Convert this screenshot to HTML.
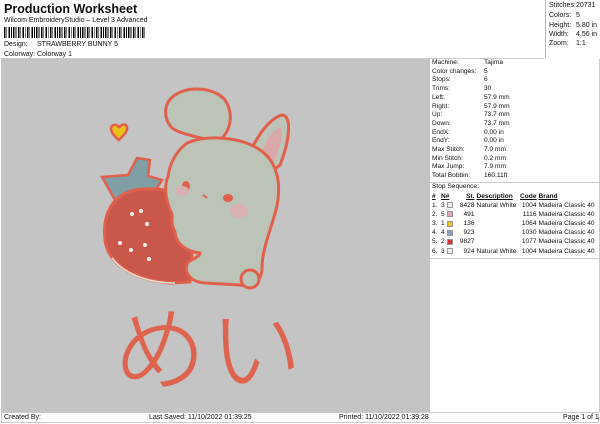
<!DOCTYPE html>
<html><head><meta charset="utf-8"><style>
*{margin:0;padding:0;box-sizing:border-box}
body{width:600px;height:424px;background:#fff;font-family:"Liberation Sans",Arial,sans-serif;position:relative;overflow:hidden;color:#111}
.a{position:absolute;white-space:nowrap}
.s{font-size:7px}
#stats{position:absolute;left:545px;top:0;width:55px;height:58px;border-left:1px solid #bbb}
#gray{position:absolute;left:1px;top:59px;width:429px;height:353px;background:#c4c4c4}
#right{position:absolute;left:430px;top:59px;width:170px;height:353px;border-right:1px solid #ccc}
table{border-collapse:collapse;font-size:6.6px;white-space:nowrap}
td{padding:0;height:8.7px;line-height:8.7px}
.t2 td{height:9.1px;line-height:9.1px}
.sw{display:inline-block;width:6px;height:6px;border:1px solid #999;vertical-align:middle}
</style></head><body>
<div class="a" style="left:4px;top:2px;font-size:12.5px;font-weight:bold">Production Worksheet</div>
<div class="a s" style="left:4px;top:17px">Wilcom EmbroideryStudio – Level 3 Advanced</div>
<div class="a" style="left:4px;top:27px;width:142px;height:11px;background:repeating-linear-gradient(90deg,#000 0 1.5px,#fff 1.5px 2.5px,#000 2.5px 3.2px,#fff 3.2px 4.6px)"></div>
<div class="a s" style="left:4px;top:41px">Design:</div>
<div class="a s" style="left:37px;top:41px">STRAWBERRY BUNNY 5</div>
<div class="a s" style="left:4px;top:51px">Colorway:</div>
<div class="a s" style="left:37px;top:51px">Colorway 1</div>
<div style="position:absolute;left:0;top:58px;width:545px;border-top:1px solid #ccc"></div>
<div id="stats">
<div class="a s" style="left:3px;top:2px">Stitches:</div><div class="a s" style="left:30px;top:2px">20731</div>
<div class="a s" style="left:3px;top:12px">Colors:</div><div class="a s" style="left:30px;top:12px">5</div>
<div class="a s" style="left:3px;top:22px">Height:</div><div class="a s" style="left:30px;top:22px">5.80 in</div>
<div class="a s" style="left:3px;top:31px">Width:</div><div class="a s" style="left:30px;top:31px">4.56 in</div>
<div class="a s" style="left:3px;top:40px">Zoom:</div><div class="a s" style="left:30px;top:40px">1:1</div>
</div>
<div id="gray">
<svg width="429" height="353" viewBox="1 59 429 353" style="position:absolute;left:0;top:0">
<path d="M119 140 C110 133 109 126 114 125 C117 124 119 127 119 128 C121 124 126 123 127 127 C128 131 124 135 119 140Z" fill="#e8c21a" stroke="#e0604c" stroke-width="2.5"/>
<path d="M115 200 L102 177 L128 175 L137 158 L150 160 L148 176 L162 180 L152 196 L120 203Z" fill="#7f9fa4" stroke="#e0604c" stroke-width="2.5"/>
<path d="M135 190 C112 195 102 215 105 240 C108 265 135 280 170 283 L190 282 L195 205 C185 192 158 186 135 190Z" fill="#c9584b" stroke="#e0604c" stroke-width="3"/>
<path d="M112 258 C125 275 150 283 175 283" stroke="#e8ddd0" stroke-width="1.5" fill="none"/>
<g fill="#eee">
<circle cx="132" cy="214" r="2"/><circle cx="141" cy="211" r="2"/><circle cx="147" cy="224" r="2"/><circle cx="120" cy="243" r="2"/><circle cx="145" cy="245" r="2"/><circle cx="131" cy="250" r="2"/><circle cx="149" cy="259" r="2"/>
</g>
<path d="M222 138 C232 128 233 112 225 100 C215 88 190 85 175 95 C163 103 163 118 172 128 C182 135 200 137 212 141Z" fill="#bcc4b8" stroke="#e0604c" stroke-width="3"/>
<path d="M250 152 C258 135 270 118 282 115 C292 115 290 140 280 165 L268 175Z" fill="#bcc4b8" stroke="#e0604c" stroke-width="3"/>
<path d="M262 150 C268 136 276 127 281 128 C284 136 279 150 273 163Z" fill="#d9a9a9"/>
<path d="M187 143 C205 135 240 136 260 150 C278 162 282 185 276 210 C270 232 262 250 262 268 C262 283 250 287 240 285 L205 283 C190 282 183 272 188 262 C195 258 200 256 200 253 C188 252 176 245 175 232 C170 222 173 218 172 214 C165 200 164 185 168 177 C170 160 178 150 187 143Z" fill="#bcc4b8" stroke="#e0604c" stroke-width="3"/>
<circle cx="250" cy="279" r="9" fill="#bcc4b8" stroke="#e0604c" stroke-width="3"/>
<ellipse cx="186" cy="186" rx="4" ry="5" fill="#e0604c"/>
<ellipse cx="228" cy="198" rx="5" ry="4" fill="#e0604c"/>
<path d="M203 195 L207 198" stroke="#e0604c" stroke-width="2"/>
<ellipse cx="182" cy="191" rx="7" ry="5" fill="#d9b0b0"/>
<ellipse cx="239" cy="211" rx="9" ry="7" fill="#d9b0b0"/>
<text x="114" y="383" font-family="Noto Sans CJK JP,sans-serif" font-size="92" font-weight="300" fill="#df644f" stroke="#df644f" stroke-width="0.8" letter-spacing="4">めい</text>
</svg>
</div>
<div id="right">
<div style="position:absolute;left:2px;top:0">
<table>
<tr><td style="width:52px">Machine:</td><td>Tajima</td></tr>
<tr><td>Color changes:</td><td>5</td></tr>
<tr><td>Stops:</td><td>6</td></tr>
<tr><td>Trims:</td><td>30</td></tr>
<tr><td>Left:</td><td>57.9 mm</td></tr>
<tr><td>Right:</td><td>57.9 mm</td></tr>
<tr><td>Up:</td><td>73.7 mm</td></tr>
<tr><td>Down:</td><td>73.7 mm</td></tr>
<tr><td>EndX:</td><td>0.00 in</td></tr>
<tr><td>EndY:</td><td>0.00 in</td></tr>
<tr><td>Max Stitch:</td><td>7.0 mm</td></tr>
<tr><td>Min Stitch:</td><td>0.2 mm</td></tr>
<tr><td>Max Jump:</td><td>7.9 mm</td></tr>
<tr><td>Total Bobbin:</td><td>160.11ft</td></tr>
</table></div>
<div style="position:absolute;left:0;top:123px;width:170px;border-top:1px solid #ccc"></div>
<div class="a" style="left:2px;top:124px;font-size:6.6px">Stop Sequence:</div>
<div style="position:absolute;left:2px;top:133px">
<table class="t2">
<tr style="font-weight:bold;text-decoration:underline"><td style="width:9px">#</td><td style="width:11px">N#</td><td style="width:22px;text-align:right">St.</td><td style="width:45px;padding-left:2px">Description</td><td style="width:17px;text-align:right">Code</td><td style="padding-left:2px">Brand</td></tr>
<tr><td>1.</td><td>3 <span class="sw" style="background:#eee"></span></td><td style="text-align:right">8428</td><td style="padding-left:2px">Natural White</td><td style="text-align:right">1004</td><td style="padding-left:2px">Madeira Classic 40</td></tr>
<tr><td>2.</td><td>5 <span class="sw" style="background:#e8a8b4"></span></td><td style="text-align:right">491</td><td></td><td style="text-align:right">1116</td><td style="padding-left:2px">Madeira Classic 40</td></tr>
<tr><td>3.</td><td>1 <span class="sw" style="background:#f0c020"></span></td><td style="text-align:right">136</td><td></td><td style="text-align:right">1064</td><td style="padding-left:2px">Madeira Classic 40</td></tr>
<tr><td>4.</td><td>4 <span class="sw" style="background:#88a4c4"></span></td><td style="text-align:right">923</td><td></td><td style="text-align:right">1030</td><td style="padding-left:2px">Madeira Classic 40</td></tr>
<tr><td>5.</td><td>2 <span class="sw" style="background:#e03030"></span></td><td style="text-align:right">9827</td><td></td><td style="text-align:right">1077</td><td style="padding-left:2px">Madeira Classic 40</td></tr>
<tr><td>6.</td><td>3 <span class="sw" style="background:#eee"></span></td><td style="text-align:right">924</td><td style="padding-left:2px">Natural White</td><td style="text-align:right">1004</td><td style="padding-left:2px">Madeira Classic 40</td></tr>
</table></div>
<div style="position:absolute;left:0;top:199px;width:170px;border-top:1px solid #ccc"></div>
</div>
<div style="position:absolute;left:1px;top:412px;width:598px;height:11px;border:1px solid #ccc"></div>
<div class="a s" style="left:4px;top:414px">Created By:</div>
<div class="a s" style="left:149px;top:414px">Last Saved: 11/10/2022 01:39:25</div>
<div class="a s" style="left:339px;top:414px">Printed: 11/10/2022 01:39:28</div>
<div class="a s" style="left:563px;top:414px">Page 1 of 1</div>
</body></html>
